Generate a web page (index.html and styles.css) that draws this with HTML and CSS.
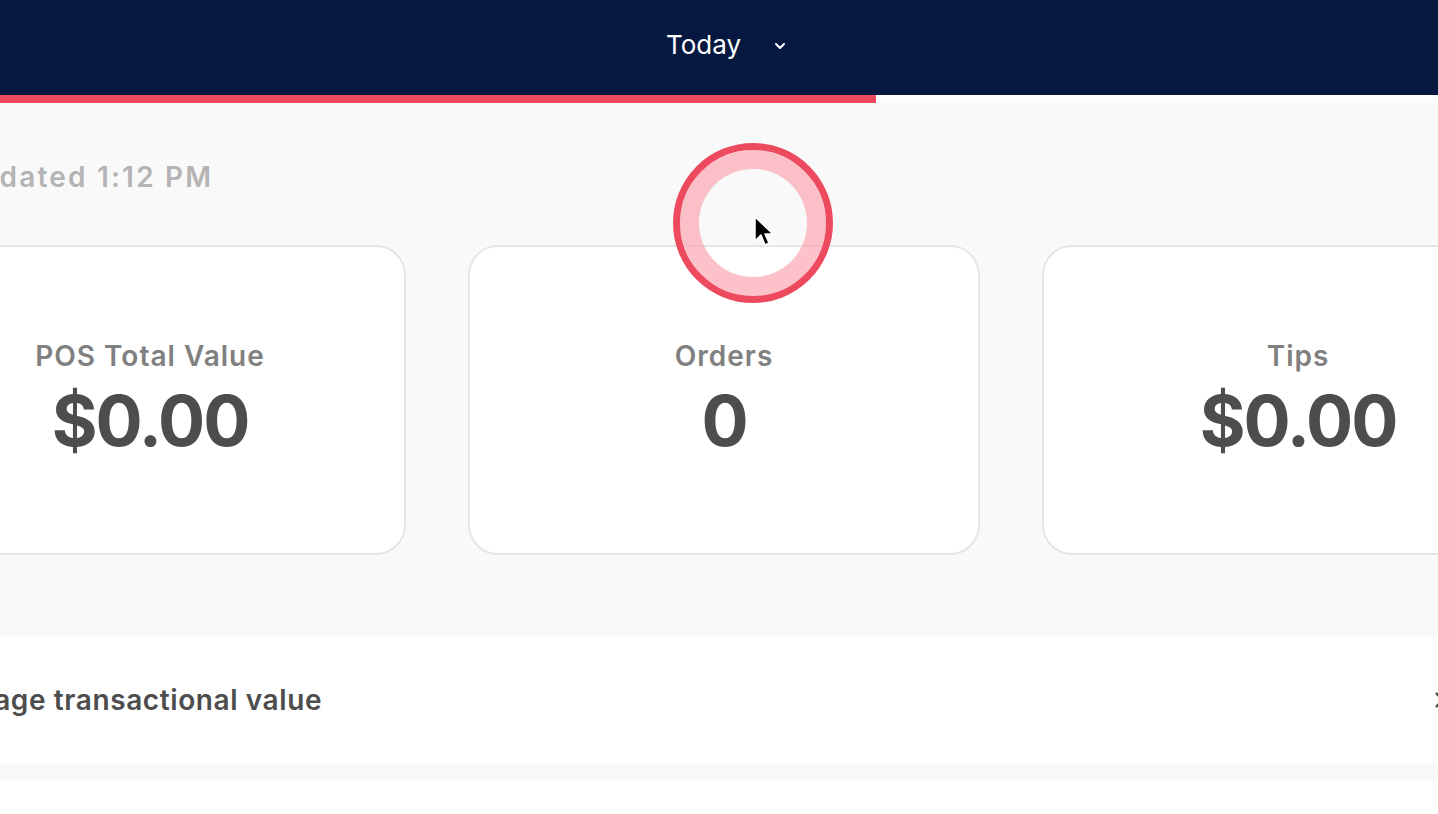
FILE: index.html
```html
<!DOCTYPE html>
<html>
<head>
<meta charset="utf-8">
<link rel="stylesheet" href="styles.css">
</head>
<body>
<header class="topbar">
  <div class="range">
    <span class="range-label">Today</span>
    <svg class="chev" width="12" height="8" viewBox="0 0 12 8"><path d="M2 2 L6 6 L10 2" fill="none" stroke="#fff" stroke-width="2" stroke-linecap="round" stroke-linejoin="round"/></svg>
  </div>
</header>
<div class="progress"><div class="progress-fill" style="width:876px"></div></div>
<main class="summary">
  <p class="updated">Updated 1:12 PM</p>
  <div class="cards">
    <div class="card"><div class="card-label">POS Total Value</div><div class="card-value">$0.00</div></div>
    <div class="card"><div class="card-label">Orders</div><div class="card-value">0</div></div>
    <div class="card"><div class="card-label">Tips</div><div class="card-value">$0.00</div></div>
  </div>
</main>
<section class="metric-row">
  <span class="metric-title">Average transactional value</span>
  <svg class="metric-chev" width="14" height="20" viewBox="0 0 14 20"><path d="M3 3 L10 10 L3 17" fill="none" stroke="#4d4d4d" stroke-width="2.5"/></svg>
</section>
<div class="divider"></div>
<div class="tail"></div>
<div class="click-ring">
  <svg class="pointer" width="22" height="34" viewBox="0 0 22 34"><path d="M1 1 L1 25 L7 19 L11 29 L15 27 L11 18 L19 18 Z" fill="#000" stroke="#fff" stroke-width="1.5" stroke-linejoin="round"/></svg>
</div>
</body>
</html>
```
FILE: styles.css
```css
html, body { margin: 0; padding: 0; }
body {
  width: 1438px;
  height: 814px;
  overflow: hidden;
  position: relative;
  background: #fff;
  font-family: Inter, "Open Sans", "Liberation Sans", sans-serif;
}
.topbar {
  height: 95px;
  background: #061840;
  display: flex;
  align-items: center;
  justify-content: center;
}
.range {
  display: flex;
  align-items: center;
  gap: 33px;
  margin-left: 14px;
  margin-top: -6px;
  color: #fff;
}
.range-label { font-size: 26px; font-weight: 400; }
.chev { margin-top: 2px; }
.progress { height: 8px; background: #fff; }
.progress-fill { height: 100%; background: #ee4a5f; }
.summary {
  background: #f9f9f9;
  height: 533px;
  box-sizing: border-box;
  padding-top: 57px;
}
.updated {
  margin: 0 0 0 -43px;
  font-size: 28px;
  font-weight: 600;
  color: #b4b4b4;
  line-height: 34px;
  letter-spacing: 2.2px;
}
.cards {
  display: grid;
  grid-template-columns: repeat(3, 512px);
  gap: 62px;
  margin-left: -106px;
  margin-top: 51px;
}
.card {
  height: 310px;
  box-sizing: border-box;
  background: #fff;
  border: 2px solid #e6e6e6;
  border-radius: 30px;
  display: flex;
  flex-direction: column;
  align-items: center;
  padding-top: 94px;
}
.card-label {
  font-size: 28px;
  font-weight: 600;
  color: #808080;
  line-height: 30px;
  letter-spacing: 1px;
}
.card-value {
  font-size: 70px;
  font-weight: 700;
  color: #4d4d4d;
  line-height: 76px;
  letter-spacing: -2px;
  margin-top: 12px;
}
.metric-row {
  height: 128px;
  background: #fff;
  display: flex;
  align-items: center;
  justify-content: space-between;
  margin-left: -70px;
  margin-right: -9px;
}
.metric-title {
  font-size: 28px;
  font-weight: 600;
  color: #4d4d4d;
  letter-spacing: 0.6px;
}
.divider { height: 16px; background: #f9f9f9; }
.tail { height: 34px; background: #fff; }
.click-ring {
  position: absolute;
  left: 673px;
  top: 143px;
  width: 160px;
  height: 160px;
  box-sizing: border-box;
  border-radius: 50%;
  border: 7px solid #ee4a5f;
  box-shadow: inset 0 0 0 19px rgba(250, 160, 172, 0.65);
}
.pointer {
  position: absolute;
  left: 74px;
  top: 66px;
}
```
